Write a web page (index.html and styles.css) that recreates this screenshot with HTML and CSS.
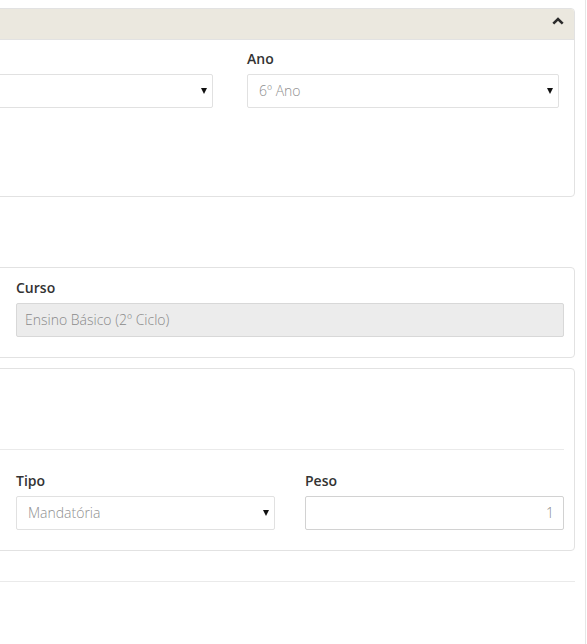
FILE: index.html
```html
<!DOCTYPE html>
<html lang="pt">
<head>
<meta charset="utf-8">
<title>Disciplina</title>
<link rel="stylesheet" href="styles.css">
</head>
<body>
<div class="page">
  <main class="main">
    <section class="panel">
      <div class="panel-heading">
        <svg class="chevron" width="12" height="8" viewBox="0 0 12 8"><polyline points="1.3,6.6 6,2 10.7,6.6" fill="none" stroke="#2b2b2b" stroke-width="2.6" stroke-linecap="butt" stroke-linejoin="miter"/></svg>
      </div>
      <div class="panel-body body-top">
        <div class="row row-top">
          <div class="field">
            <label class="label">&nbsp;</label>
            <div class="select"><span class="value"></span><span class="caret"></span></div>
          </div>
          <div class="field">
            <label class="label">Ano</label>
            <div class="select"><span class="value">6º Ano</span><span class="caret"></span></div>
          </div>
        </div>
      </div>
    </section>

    <section class="panel panel-curso">
      <div class="panel-body body-form">
        <div class="field">
          <label class="label">Curso</label>
          <div class="input disabled">Ensino Básico (2º Ciclo)</div>
        </div>
      </div>
    </section>

    <section class="panel panel-tipo">
      <div class="panel-body body-form body-tipo">
        <div class="spacer"></div>
        <hr class="divider">
        <div class="row row-two">
          <div class="field">
            <label class="label">Tipo</label>
            <div class="select"><span class="value">Mandatória</span><span class="caret"></span></div>
          </div>
          <div class="field">
            <label class="label">Peso</label>
            <div class="input number">1</div>
          </div>
        </div>
      </div>
    </section>

    <hr class="page-rule">
  </main>
  <div class="gutter"></div>
  <div class="edge"></div>
  <div class="edge-space"></div>
</div>
</body>
</html>
```

FILE: styles.css
```css
html, body {
  margin: 0;
  padding: 0;
  background: #ffffff;
}

body {
  font-family: "Open Sans", "Liberation Sans", sans-serif;
  font-size: 14px;
  line-height: 20px;
  color: #333333;
  overflow: hidden;
}

.page {
  display: flex;
  width: 587px;
  min-height: 644px;
}

.main {
  flex: 1;
  min-width: 0;
  margin-left: -20px;
  padding-top: 8px;
}

.gutter {
  width: 10px;
}

.edge {
  width: 1px;
  background: #e6e6e6;
}

.edge-space {
  width: 1px;
}

.panel {
  border: 1px solid #e2e2e2;
  border-radius: 4px;
  background: #fff;
}

.panel-heading {
  height: 30px;
  background: #ebe8df;
  border-bottom: 1px solid #e2e2e2;
  border-radius: 3px 3px 0 0;
  display: flex;
  align-items: center;
  justify-content: flex-end;
  padding: 0 10px;
}

.chevron {
  display: block;
  margin-bottom: 6px;
}

.panel-body {
  box-sizing: border-box;
}

.body-top {
  padding: 9px 15px 88px 15px;
}

.row {
  display: grid;
}

.row-top {
  grid-template-columns: 1fr 312px;
  column-gap: 34px;
}

.row-two {
  grid-template-columns: 1fr 1fr;
  column-gap: 30px;
}

.label {
  display: block;
  font-weight: 600;
  color: #333333;
  margin-bottom: 5px;
  height: 20px;
}

.select {
  box-sizing: border-box;
  height: 34px;
  border: 1px solid #e1e1e1;
  border-radius: 2px;
  display: flex;
  align-items: center;
  padding: 0 5px 0 11px;
  font-weight: 300;
  color: #8f8f8f;
  background: #fff;
}

.value {
  flex: 1;
}

.caret {
  width: 0;
  height: 0;
  border-left: 3px solid transparent;
  border-right: 3px solid transparent;
  border-top: 6px solid #111;
}

.input {
  box-sizing: border-box;
  height: 34px;
  border: 1px solid #d2d2d2;
  border-radius: 2px;
  padding: 0 8px;
  display: flex;
  align-items: center;
  font-weight: 300;
  color: #8a8a8a;
}

.input.disabled {
  background: #ececec;
  border-color: #d8d8d8;
}

.input.number {
  justify-content: flex-end;
  padding-right: 9px;
  color: #888;
}

.panel-curso {
  margin-top: 70px;
}

.panel-tipo {
  margin-top: 10px;
}

.body-form {
  padding: 10px 10px 20px 35px;
}

.body-tipo {
  padding-top: 0;
}

.spacer {
  height: 80px;
}

.divider {
  border: 0;
  border-top: 1px solid #eaeaea;
  margin: 0 0 21px -35px;
  height: 0;
}

.page-rule {
  border: 0;
  border-top: 1px solid #eaeaea;
  margin: 30px 0 0 0;
  height: 0;
}
```
